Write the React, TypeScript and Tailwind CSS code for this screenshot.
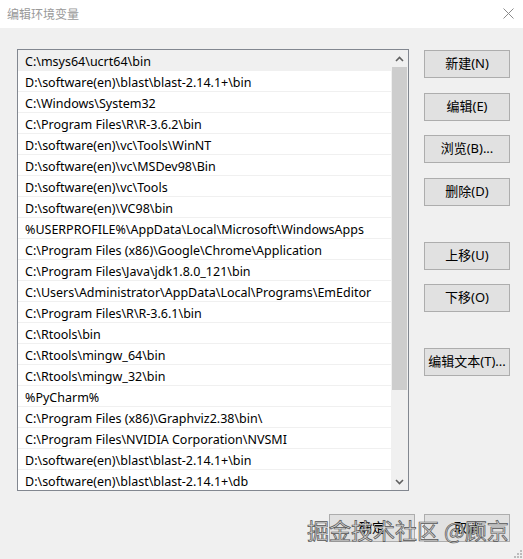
import React from 'react';

const paths = [
  'C:\\msys64\\ucrt64\\bin',
  'D:\\software(en)\\blast\\blast-2.14.1+\\bin',
  'C:\\Windows\\System32',
  'C:\\Program Files\\R\\R-3.6.2\\bin',
  'D:\\software(en)\\vc\\Tools\\WinNT',
  'D:\\software(en)\\vc\\MSDev98\\Bin',
  'D:\\software(en)\\vc\\Tools',
  'D:\\software(en)\\VC98\\bin',
  '%USERPROFILE%\\AppData\\Local\\Microsoft\\WindowsApps',
  'C:\\Program Files (x86)\\Google\\Chrome\\Application',
  'C:\\Program Files\\Java\\jdk1.8.0_121\\bin',
  'C:\\Users\\Administrator\\AppData\\Local\\Programs\\EmEditor',
  'C:\\Program Files\\R\\R-3.6.1\\bin',
  'C:\\Rtools\\bin',
  'C:\\Rtools\\mingw_64\\bin',
  'C:\\Rtools\\mingw_32\\bin',
  '%PyCharm%',
  'C:\\Program Files (x86)\\Graphviz2.38\\bin\\',
  'C:\\Program Files\\NVIDIA Corporation\\NVSMI',
  'D:\\software(en)\\blast\\blast-2.14.1+\\bin',
  'D:\\software(en)\\blast\\blast-2.14.1+\\db',
];

const font = "font-['Noto_Sans','Noto_Sans_CJK_SC',sans-serif]";

const WinButton = ({ label, className = '' }: { label: string; className?: string }) => (
  <button
    className={`w-[86px] h-[28px] bg-[#e1e1e1] border border-[#adadad] text-[13px] text-black flex items-center justify-center ${className}`}
  >
    {label}
  </button>
);

export default function App() {
  return (
    <div className={`relative w-[523px] h-[559px] bg-[#f0f0f0] flex flex-col overflow-hidden ${font}`}>
      {/* title bar */}
      <div className="h-[28px] bg-white flex items-center justify-between pl-[7px] pr-[9px]">
        <span className="text-[12px] text-[#999999] font-['Noto_Sans_CJK_SC',sans-serif]">编辑环境变量</span>
        <svg width="11" height="11" viewBox="0 0 11 11" className="mt-[-2px]">
          <path d="M0.5 0.5 L10.5 10.5 M10.5 0.5 L0.5 10.5" stroke="#8a8a8a" strokeWidth="1" fill="none" />
        </svg>
      </div>

      <div className="flex pt-[21px] pl-[17px]">
        {/* path list */}
        <div className="w-[392px] h-[442px] border border-[#828790] bg-white flex overflow-hidden">
          <div className="flex-1 flex flex-col">
            {paths.map((p, i) => (
              <div
                key={i}
                className={`h-[21px] shrink-0 flex items-center pt-[4px] pl-[7px] border-b border-[#f0f0f0] text-[12.5px] text-black whitespace-nowrap ${
                  i === 0 ? 'bg-[#f0f0f0]' : ''
                }`}
              >
                {p}
              </div>
            ))}
          </div>
          {/* scrollbar */}
          <div className="w-[17px] bg-[#f0f0f0] flex flex-col">
            <div className="h-[17px] flex items-center justify-center">
              <svg width="9" height="6" viewBox="0 0 9 6">
                <path d="M1 5 L4.5 1.5 L8 5" stroke="#606060" strokeWidth="1.6" fill="none" />
              </svg>
            </div>
            <div className="h-[323px] mx-[1px] bg-[#cdcdcd]" />
            <div className="flex-1" />
            <div className="h-[17px] flex items-center justify-center">
              <svg width="9" height="6" viewBox="0 0 9 6">
                <path d="M1 1 L4.5 4.5 L8 1" stroke="#606060" strokeWidth="1.6" fill="none" />
              </svg>
            </div>
          </div>
        </div>

        {/* action buttons */}
        <div className="flex flex-col ml-[15px] pt-[1px]">
          <WinButton label="新建(N)" />
          <WinButton label="编辑(E)" className="mt-[15px]" />
          <WinButton label="浏览(B)..." className="mt-[14px]" />
          <WinButton label="删除(D)" className="mt-[15px]" />
          <WinButton label="上移(U)" className="mt-[36px]" />
          <WinButton label="下移(O)" className="mt-[14px]" />
          <WinButton label="编辑文本(T)..." className="mt-[36px]" />
        </div>
      </div>

      {/* dialog buttons */}
      <div className="flex justify-end gap-[9px] pr-[13px] mt-[23px]">
        <WinButton label="确定" />
        <WinButton label="取消" />
      </div>

      {/* watermark over the dialog buttons */}
      <div className="absolute left-[307px] top-[514px] text-[22px] leading-[30px] text-[#d8d8d8] [-webkit-text-stroke:0.7px_#555555] font-['Noto_Sans_CJK_SC',sans-serif] whitespace-nowrap pointer-events-none">
        掘金技术社区 @顾京
      </div>

      {/* size grip */}
      <svg width="8" height="8" viewBox="0 0 8 8" className="absolute right-[1px] bottom-[1px]">
        <rect x="6" y="0" width="2" height="2" fill="#bcbcbc" />
        <rect x="3" y="3" width="2" height="2" fill="#bcbcbc" />
        <rect x="6" y="3" width="2" height="2" fill="#bcbcbc" />
        <rect x="0" y="6" width="2" height="2" fill="#bcbcbc" />
        <rect x="3" y="6" width="2" height="2" fill="#bcbcbc" />
        <rect x="6" y="6" width="2" height="2" fill="#bcbcbc" />
      </svg>
    </div>
  );
}
